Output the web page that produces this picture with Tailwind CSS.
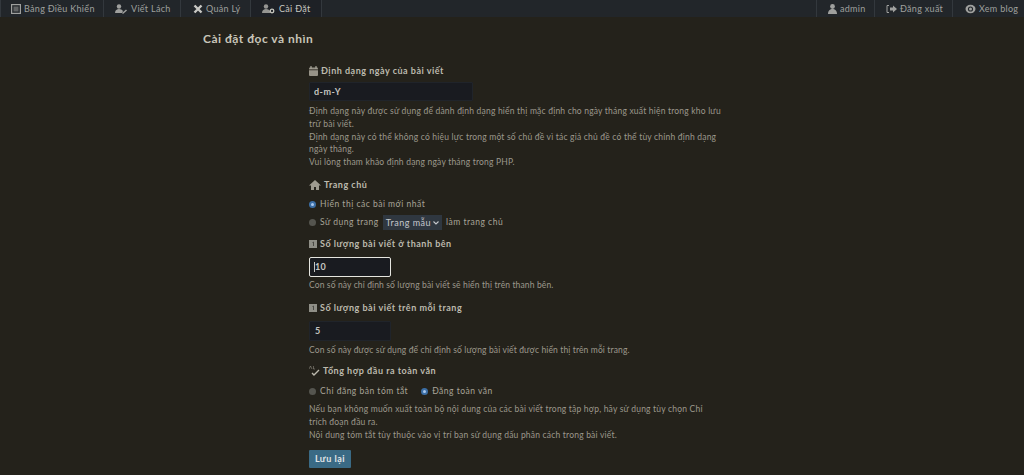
<!DOCTYPE html>
<html lang="vi">
<head>
    <meta charset="UTF-8">
    <title>Cài đặt đọc và nhìn</title>
    <script src="https://cdn.jsdelivr.net/npm/@tailwindcss/browser@4"></script>
</head>
<body class="bg-[#24221b] text-[#9c988c] font-['Lato',sans-serif] text-[8.5px] tracking-[0.2px] h-[475px] overflow-hidden">

    <!-- Top bar -->
    <nav class="h-[17px] bg-[#22262a] flex justify-between text-[9px] tracking-[0.3px] text-[#9fa09e]">
        <div class="flex">
            <a class="w-[104px] pl-[10px] flex items-center gap-[3px] border-x border-[#33383d]">
                <svg class="w-[10px] h-[10px]" viewBox="0 0 10 10"><rect x=".6" y=".6" width="8.800" height="8.800" fill="none" stroke="currentColor" stroke-width="1.200"/><rect x="2.500" y="2.500" width="5" height="5" fill="currentColor" opacity=".5"/></svg>
                <span>Bảng Điều Khiển</span>
            </a>
            <a class="w-[77px] pl-[10px] flex items-center gap-[3px] border-r border-[#33383d]">
                <svg class="w-[14px] h-[10px]" viewBox="0 0 14 10"><circle cx="5" cy="2.500" r="2.200" fill="currentColor"/><path d="M1 9c0-3 2-4 4-4s3 .7 4 2l-1 2z" fill="currentColor"/><path d="M8 9l4-3.500 1 1L9 10z" fill="currentColor"/></svg>
                <span>Viết Lách</span>
            </a>
            <a class="w-[70px] pl-[12px] flex items-center gap-[3px] border-r border-[#33383d]">
                <svg class="w-[10px] h-[10px] text-[#c8c8c4]" viewBox="0 0 10 10"><path d="M1.500 1.500l7 7M8.500 1.500l-7 7" stroke="currentColor" stroke-width="2.400"/></svg>
                <span>Quản Lý</span>
            </a>
            <a class="w-[71px] pl-[10px] flex items-center gap-[3px] border-r border-[#33383d] bg-[#1e2126] text-[#c8c8c0]">
                <svg class="w-[15px] h-[10px]" viewBox="0 0 15 10"><circle cx="5" cy="2.500" r="2.200" fill="currentColor" opacity=".7"/><path d="M1 9c0-3 2-4 4-4s3 .7 4 2v2z" fill="currentColor" opacity=".7"/><circle cx="11" cy="7" r="1.800" fill="none" stroke="currentColor" stroke-width="1.300"/></svg>
                <span>Cài Đặt</span>
            </a>
        </div>
        <div class="flex">
            <a class="w-[58px] pl-[11px] flex items-center gap-[3px] border-l border-[#33383d]">
                <svg class="w-[9px] h-[10px]" viewBox="0 0 9 10"><circle cx="4.500" cy="2.500" r="2.400" fill="currentColor"/><path d="M0 10c0-3.500 2-5 4.500-5S9 6.500 9 10z" fill="currentColor"/></svg>
                <span>admin</span>
            </a>
            <a class="w-[78px] pl-[11px] flex items-center gap-[3px] border-l border-[#33383d]">
                <svg class="w-[11px] h-[10px]" viewBox="0 0 11 10"><path d="M3 1.500H1v7h2" fill="none" stroke="currentColor"/><path d="M4 3.500h3V1.500l4 3.500-4 3.500v-2H4z" fill="currentColor"/></svg>
                <span>Đăng xuất</span>
            </a>
            <a class="w-[72px] pl-[12px] flex items-center gap-[3px] border-l border-[#33383d]">
                <svg class="w-[11px] h-[10px]" viewBox="0 0 11 10"><ellipse cx="5.500" cy="5" rx="5" ry="4.200" fill="currentColor"/><circle cx="5.500" cy="5" r="2.600" fill="#22262a"/><circle cx="5.500" cy="5" r="1.500" fill="currentColor"/></svg>
                <span>Xem blog</span>
            </a>
        </div>
    </nav>

    <main class="pl-[203px]">
        <h1 class="mt-[14px] text-[12px] tracking-[0.5px] leading-[16px] font-bold text-[#c8c5b8]">Cài đặt đọc và nhìn</h1>

        <form class="ml-[106px] w-[413px]">
            <!-- Date format -->
            <h3 class="mt-[18px] text-[9px] tracking-[0.5px] leading-[12px] font-bold text-[#bdbaae] flex items-center gap-[3px]">
                <svg class="w-[9px] h-[10px]" viewBox="0 0 9 10"><rect x="0" y="1.500" width="9" height="8.500" rx="1" fill="currentColor" opacity=".75"/><path d="M0 3.800h9" stroke="#24221b" stroke-width=".8"/><path d="M2 0v2.500M7 0v2.500" stroke="currentColor" stroke-width="1"/></svg>
                Định dạng ngày của bài viết
            </h3>
            <input value="d-m-Y" class="block mt-[5px] w-[164px] h-[19px] px-[4px] bg-[#191b20] border border-[#20242a] text-[#c5c5c0] text-[9px] tracking-[0.5px] font-bold rounded-[1px]">
            <p class="mt-[4px] leading-[12.750px]">Định dạng này được sử dụng để dành định dạng hiển thị mặc định cho ngày tháng xuất hiện trong kho lưu trữ bài viết.<br>Định dạng này có thể không có hiệu lực trong một số chủ đề vì tác giả chủ đề có thể tùy chỉnh định dạng ngày tháng.<br>Vui lòng tham khảo định dạng ngày tháng trong PHP.</p>

            <!-- Home page -->
            <h3 class="mt-[10px] text-[9px] tracking-[0.5px] leading-[12px] font-bold text-[#bdbaae] flex items-center gap-[3px]">
                <svg class="w-[12px] h-[10px]" viewBox="0 0 12 10"><path d="M6 0L0 5.500h2V10h3V7h2v3h3V5.500h2z" fill="currentColor" opacity=".8"/></svg>
                Trang chủ
            </h3>
            <label class="mt-[8px] h-[12px] flex items-center gap-[4px] text-[#a8a498] tracking-[0.5px]">
                <span class="w-[7px] h-[7px] rounded-full bg-[#a9c8ee] border-[2px] border-[#3b6ea5]"></span>
                Hiển thị các bài mới nhất
            </label>
            <div class="mt-[2px] h-[20px] flex items-center gap-[4px] text-[#a8a498] tracking-[0.5px]">
                <span class="w-[7px] h-[7px] rounded-full bg-[#55554f]"></span>
                Sử dụng trang
                <span class="h-[15px] px-[3px] bg-[#2f3740] text-[#c5c8cc] text-[9px] flex items-center gap-[2px]">Trang mẫu
                    <svg class="w-[6px] h-[4px]" viewBox="0 0 6 4"><path d="M.5.500L3 3 5.500.500" fill="none" stroke="currentColor" stroke-width="1.100"/></svg>
                </span>
                làm trang chủ
            </div>

            <!-- Sidebar count -->
            <h3 class="mt-[5px] text-[9px] tracking-[0.5px] leading-[12px] font-bold text-[#bdbaae] flex items-center gap-[3px]">
                <svg class="w-[8px] h-[8px]" viewBox="0 0 8 8"><rect width="8" height="8" fill="#8f8f87"/><path d="M3.500 2.500L4.500 2v4" fill="none" stroke="#3a3a36" stroke-width=".8"/></svg>
                Số lượng bài viết ở thanh bên
            </h3>
            <div class="mt-[7px] w-[82px] h-[20px] pl-[4px] bg-[#191b20] border border-[#e6e6e0] rounded-[2px] text-[#c5c5c0] text-[9px] font-bold flex items-center"><span class="w-px h-[10px] bg-[#c5c5c0]"></span>10</div>
            <p class="mt-[2px] leading-[12.750px] tracking-[0.13px]">Con số này chỉ định số lượng bài viết sẽ hiển thị trên thanh bên.</p>

            <!-- Per page count -->
            <h3 class="mt-[10px] text-[9px] tracking-[0.5px] leading-[12px] font-bold text-[#bdbaae] flex items-center gap-[3px]">
                <svg class="w-[8px] h-[8px]" viewBox="0 0 8 8"><rect width="8" height="8" fill="#8f8f87"/><path d="M3.500 2.500L4.500 2v4" fill="none" stroke="#3a3a36" stroke-width=".8"/></svg>
                Số lượng bài viết trên mỗi trang
            </h3>
            <input value="5" class="block mt-[7px] w-[82px] h-[20px] px-[5px] bg-[#191b20] border border-[#20242a] text-[#c5c5c0] text-[9px] font-bold rounded-[1px]">
            <p class="mt-[3px] leading-[12.750px] tracking-[0.13px]">Con số này được sử dụng để chỉ định số lượng bài viết được hiển thị trên mỗi trang.</p>

            <!-- Feed -->
            <h3 class="mt-[9px] text-[9px] tracking-[0.5px] leading-[12px] font-bold text-[#bdbaae] flex items-center gap-[3px]">
                <svg class="w-[11px] h-[11px]" viewBox="0 0 11 11"><path d="M3 9l2 2 5-5" transform="translate(0 -2)" fill="none" stroke="currentColor" stroke-width="1.400"/><path d="M0 3L1.500 0 3 3M4.500 0v3h1.500" fill="none" stroke="currentColor" stroke-width=".6" opacity=".7"/></svg>
                Tổng hợp đầu ra toàn văn
            </h3>
            <div class="mt-[8px] h-[12px] flex items-center gap-[4px] text-[#a8a498] tracking-[0.5px]">
                <span class="w-[7px] h-[7px] rounded-full bg-[#55554f]"></span>
                <span class="mr-[9px]">Chỉ đăng bản tóm tắt</span>
                <span class="w-[7px] h-[7px] rounded-full bg-[#a9c8ee] border-[2px] border-[#3b6ea5]"></span>
                Đăng toàn văn
            </div>
            <p class="mt-[6px] leading-[12.750px]">Nếu bạn không muốn xuất toàn bộ nội dung của các bài viết trong tập hợp, hãy sử dụng tùy chọn Chỉ trích đoạn đầu ra.<br>Nội dung tóm tắt tùy thuộc vào vị trí bạn sử dụng dấu phân cách trong bài viết.</p>

            <button type="button" class="block mt-[8px] w-[42px] h-[18px] bg-[#3a6a85] text-[#e2e6e8] text-[9px] tracking-[0.5px] font-bold rounded-[1px]">Lưu lại</button>
        </form>
    </main>
</body>
</html>
